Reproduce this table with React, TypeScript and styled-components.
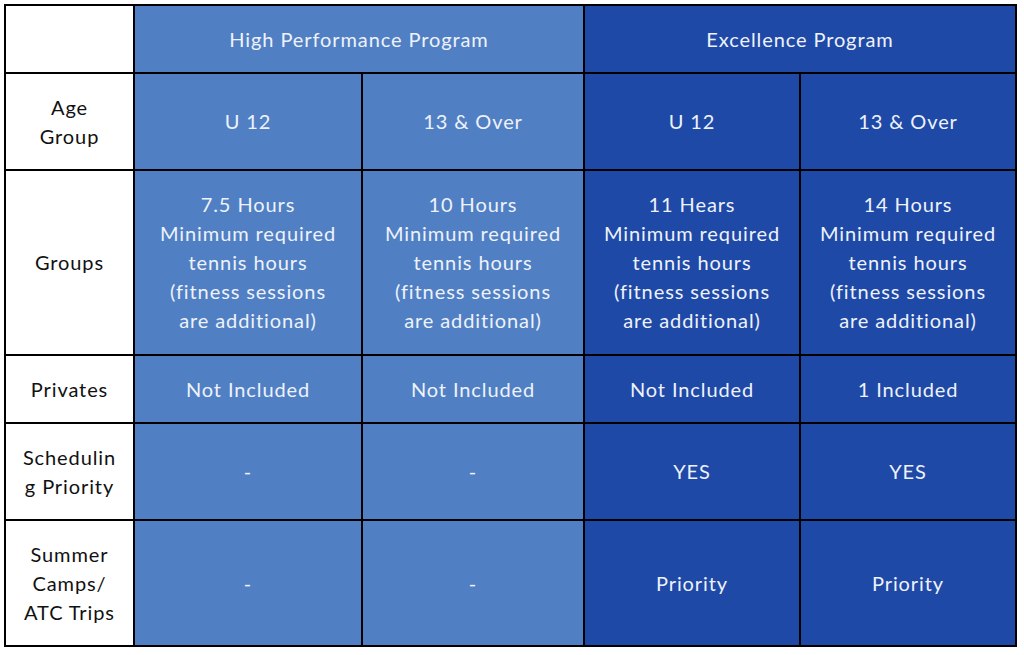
import React from "react";
import styled, { createGlobalStyle } from "styled-components";

const GlobalStyle = createGlobalStyle`
  html, body {
    margin: 0;
    padding: 0;
    background: #ffffff;
  }
  body {
    font-family: "Lato", "Noto Sans", sans-serif;
  }
`;

type Tone = "label" | "light" | "dark";

interface Row {
  label: React.ReactNode;
  height: number;
  cells: React.ReactNode[];
}

const groupsText = (hours: string) => (
  <>
    {hours}
    <br />
    Minimum required
    <br />
    tennis hours
    <br />
    (fitness sessions
    <br />
    are additional)
  </>
);

const rows: Row[] = [
  {
    label: (
      <>
        Age
        <br />
        Group
      </>
    ),
    height: 95,
    cells: ["U 12", "13 & Over", "U 12", "13 & Over"],
  },
  {
    label: "Groups",
    height: 183,
    cells: [
      groupsText("7.5 Hours"),
      groupsText("10 Hours"),
      groupsText("11 Hears"),
      groupsText("14 Hours"),
    ],
  },
  {
    label: "Privates",
    height: 66,
    cells: ["Not Included", "Not Included", "Not Included", "1 Included"],
  },
  {
    label: (
      <>
        Schedulin
        <br />g Priority
      </>
    ),
    height: 95,
    cells: ["-", "-", "YES", "YES"],
  },
  {
    label: (
      <>
        Summer
        <br />
        Camps/
        <br />
        ATC Trips
      </>
    ),
    height: 124,
    cells: ["-", "-", "Priority", "Priority"],
  },
];

export default function App() {
  return (
    <>
      <GlobalStyle />
      <Page>
        <Table $rows={[66, ...rows.map((r) => r.height)]}>
          <Cell $tone="label" />
          <Cell $tone="light" $span={2}>
            High Performance Program
          </Cell>
          <Cell $tone="dark" $span={2}>
            Excellence Program
          </Cell>
          {rows.map((row, i) => (
            <React.Fragment key={i}>
              <Cell $tone="label">{row.label}</Cell>
              {row.cells.map((c, j) => (
                <Cell key={j} $tone={j < 2 ? "light" : "dark"}>
                  {c}
                </Cell>
              ))}
            </React.Fragment>
          ))}
        </Table>
      </Page>
    </>
  );
}

const Page = styled.div`
  padding: 4px 0 0 4px;
`;

const Table = styled.div<{ $rows: number[] }>`
  display: grid;
  width: 1013px;
  box-sizing: border-box;
  grid-template-columns: 127px 226px 220px 214px 214px;
  grid-template-rows: ${({ $rows }) => $rows.map((h) => `${h}px`).join(" ")};
  gap: 2px;
  padding: 2px;
  background: #000000;
`;

const toneBg: Record<Tone, string> = {
  label: "#ffffff",
  light: "#5080c3",
  dark: "#1e49a6",
};

const Cell = styled.div<{ $tone: Tone; $span?: number }>`
  grid-column: span ${({ $span }) => $span ?? 1};
  display: flex;
  align-items: center;
  justify-content: center;
  text-align: center;
  background: ${({ $tone }) => toneBg[$tone]};
  color: ${({ $tone }) => ($tone === "label" ? "#111111" : "#eef2fa")};
  font-size: 20px;
  line-height: 29px;
  letter-spacing: 0.9px;
`;
